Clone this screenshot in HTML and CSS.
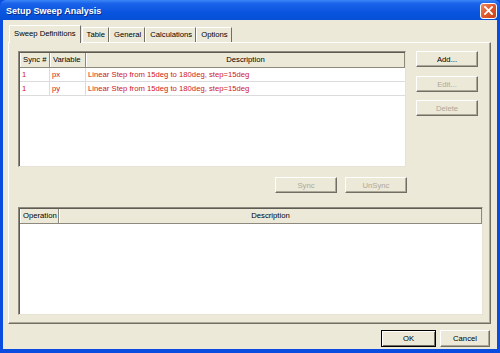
FILE: index.html
```html
<!DOCTYPE html>
<html lang="en">
  <head>
    <meta charset="UTF-8" />
    <title>Setup Sweep Analysis</title>
    <link rel="stylesheet" href="styles.css">
  </head>
  <body>
    <div class="window">
      <div class="titlebar">
        <span class="title">Setup Sweep Analysis</span>
        <span class="close">
          <svg width="9" height="9" viewBox="0 0 9 9">
            <path d="M1 1 L8 8 M8 1 L1 8" stroke="#fff" stroke-width="1.8" stroke-linecap="square" />
          </svg>
        </span>
      </div>

      <div class="client">
        <!-- Tabs -->
        <div class="tabs">
          <div class="tab active">Sweep Definitions</div>
          <div class="tab">Table</div>
          <div class="tab">General</div>
          <div class="tab">Calculations</div>
          <div class="tab">Options</div>
        </div>

        <div class="panel">
          <div class="top-row">
            <div class="list list-sweep">
              <div class="list-head">
                <div class="col col-sync">Sync #</div>
                <div class="col col-var">Variable</div>
                <div class="col col-desc">Description</div>
              </div>
              <div class="list-row">
                <div class="col col-sync">1</div>
                <div class="col col-var">px</div>
                <div class="col col-desc">Linear Step from 15deg to 180deg, step=15deg</div>
              </div>
              <div class="list-row">
                <div class="col col-sync">1</div>
                <div class="col col-var">py</div>
                <div class="col col-desc">Linear Step from 15deg to 180deg, step=15deg</div>
              </div>
            </div>

            <div class="side-buttons">
              <button class="btn">Add...</button>
              <button class="btn" disabled>Edit...</button>
              <button class="btn" disabled>Delete</button>
            </div>
          </div>

          <div class="sync-row">
            <button class="btn" disabled>Sync</button>
            <button class="btn" disabled>UnSync</button>
          </div>

          <div class="list list-ops">
            <div class="list-head">
              <div class="col col-op">Operation</div>
              <div class="col col-opdesc">Description</div>
            </div>
          </div>
        </div>

        <div class="footer">
          <button class="btn btn-ok">OK</button>
          <button class="btn btn-cancel">Cancel</button>
        </div>
      </div>
    </div>
  </body>
</html>
```

FILE: styles.css
```css
* {
  margin: 0;
  padding: 0;
  box-sizing: border-box;
}

body {
  font-family: "Liberation Sans", Arial, sans-serif;
  font-size: 7.7px;
  color: #000;
  background: #ffffff;
}

.window {
  width: 500px;
  height: 353px;
  display: flex;
  flex-direction: column;
  background: #0b4ce0;
  padding: 0 3px 4px 3px;
}

/* Title bar */
.titlebar {
  height: 20px;
  margin: 0 -3px;
  display: flex;
  align-items: center;
  justify-content: space-between;
  padding: 0 3px 0 6px;
  background: linear-gradient(180deg, #3b86f5 0%, #1a62e8 18%, #0a55e0 60%, #0650d6 100%);
  border-radius: 6px 6px 0 0;
}

.title {
  color: #fff;
  font-weight: bold;
  font-size: 9px;
  text-shadow: 1px 1px 0 #0a2a8a;
  margin-top: 1px;
}

.close {
  width: 17px;
  height: 16px;
  display: flex;
  align-items: center;
  justify-content: center;
  background: linear-gradient(135deg, #f08a64 0%, #e0582c 50%, #c84416 100%);
  border: 1px solid #fff;
  border-radius: 3px;
  margin-top: 1px;
}

/* Client area */
.client {
  flex: 1;
  display: flex;
  flex-direction: column;
  background: #ece9d8;
  padding: 5px 0 0 5px;
}

.tabs {
  display: flex;
  align-items: flex-end;
  height: 17px;
  padding-left: 1px;
  position: relative;
  z-index: 1;
}

.tab {
  height: 15px;
  line-height: 14px;
  padding: 0 3px 0 4px;
  border-top: 1px solid #fff;
  border-left: 1px solid #fff;
  border-right: 1px solid #716f64;
  background: #ece9d8;
}

.tab.active {
  height: 18px;
  line-height: 16px;
  padding: 0 4px;
  margin-bottom: -1px;
  margin-right: 1px;
}

.panel {
  width: 483px;
  height: 282px;
  border-top: 1px solid #fff;
  border-left: 1px solid #fff;
  border-right: 1px solid #716f64;
  border-bottom: 1px solid #716f64;
  box-shadow: inset -1px -1px 0 #aca899;
  padding: 8px 8px 0 9px;
  display: flex;
  flex-direction: column;
}

.top-row {
  display: flex;
  gap: 10px;
}

/* List views */
.list {
  background: #fff;
  border-top: 1px solid #8d8a7d;
  border-left: 1px solid #8d8a7d;
  border-right: 1px solid #e6e3d4;
  border-bottom: 1px solid #e6e3d4;
  box-shadow: inset 1px 1px 0 #5e5c52;
}

.list-sweep {
  width: 388px;
  height: 116px;
}

.list-ops {
  width: 465px;
  height: 108px;
  margin-top: 14px;
}

.list-head {
  display: flex;
  height: 15px;
  margin: 1px 0 0 1px;
  background: #ece9d8;
  border-bottom: 1px solid #8d8a7d;
}

.list-head .col {
  line-height: 13px;
  border-left: 1px solid #fff;
  border-right: 1px solid #8d8a7d;
  padding-left: 2px;
}

.list-row {
  display: flex;
  height: 14px;
  margin-left: 1px;
  border-bottom: 1px solid #dcdcdc;
  color: #d01818;
}

.list-row .col {
  line-height: 14px;
  padding-left: 2px;
  border-right: 1px solid #dcdcdc;
}

.col-sync {
  width: 30px;
}

.col-var {
  width: 36px;
}

.col-desc {
  flex: 1;
}

.list-head .col-desc,
.list-head .col-opdesc {
  text-align: center;
  padding-left: 0;
}

.list-row .col-desc {
  border-right: none;
}

.col-op {
  width: 39px;
}

.col-opdesc {
  flex: 1;
}

/* Buttons */
.btn {
  font-family: "Liberation Sans", Arial, sans-serif;
  font-size: 7.7px;
  color: #000;
  background: #ece9d8;
  width: 62px;
  height: 16px;
  border-top: 1px solid #fff;
  border-left: 1px solid #fff;
  border-right: 1px solid #716f64;
  border-bottom: 1px solid #716f64;
  box-shadow: inset -1px -1px 0 #aca899;
}

.btn:disabled {
  color: #aca899;
}

.side-buttons {
  display: flex;
  flex-direction: column;
}

.side-buttons .btn + .btn {
  margin-top: 8px;
}

.side-buttons .btn:nth-child(2) {
  margin-top: 9px;
}

.sync-row {
  display: flex;
  justify-content: flex-end;
  gap: 8px;
  width: 389px;
  margin-top: 10px;
}

.footer {
  display: flex;
  justify-content: flex-end;
  gap: 4px;
  padding: 6px 7px 0 0;
}

.btn-ok {
  width: 55px;
  height: 17px;
  border: 1px solid #000;
  box-shadow: inset 1px 1px 0 #fff, inset -1px -1px 0 #716f64;
}

.btn-cancel {
  width: 50px;
  height: 17px;
}
```
